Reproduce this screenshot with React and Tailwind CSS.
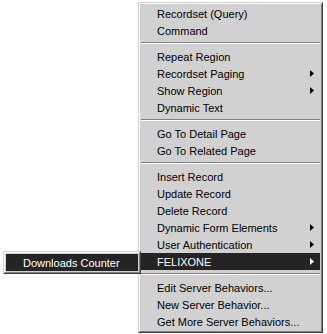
import React from "react";

const MENU = [
  { t: "Recordset (Query)" },
  { t: "Command" },
  "sep",
  { t: "Repeat Region" },
  { t: "Recordset Paging", sub: true },
  { t: "Show Region", sub: true },
  { t: "Dynamic Text" },
  "sep",
  { t: "Go To Detail Page" },
  { t: "Go To Related Page" },
  "sep",
  { t: "Insert Record" },
  { t: "Update Record" },
  { t: "Delete Record" },
  { t: "Dynamic Form Elements", sub: true },
  { t: "User Authentication", sub: true },
  { t: "FELIXONE", sub: true, active: true },
  "sep",
  { t: "Edit Server Behaviors..." },
  { t: "New Server Behavior..." },
  { t: "Get More Server Behaviors..." },
];

function Arrow({ white }) {
  return (
    <svg width="4" height="7" viewBox="0 0 4 7" className="block">
      <polygon points="0,0 4,3.5 0,7" fill={white ? "#ffffff" : "#000000"} />
    </svg>
  );
}

function Frame({ children, className = "" }) {
  return (
    <div className={`border border-t-[#d1d1d1] border-l-[#d1d1d1] border-b-[#404040] border-r-[#404040] bg-[#d1d1d1] ${className}`}>
      <div className="border border-t-white border-l-white border-b-[#808080] border-r-[#808080] p-px">
        {children}
      </div>
    </div>
  );
}

export default function App() {
  return (
    <div
      className="relative w-[327px] h-[334px] bg-white overflow-hidden text-[11px] text-black"
      style={{ fontFamily: '"Liberation Sans", Arial, sans-serif' }}
    >
      <div className="pl-[138px] pt-[2px]">
        <Frame className="w-[185px]">
          {MENU.map((it, i) =>
            it === "sep" ? (
              <div key={i} className="h-[9px] pt-[3px]">
                <div className="h-px bg-[#808080]" />
                <div className="h-px bg-white" />
              </div>
            ) : (
              <div
                key={i}
                className={`h-[17px] leading-[17px] pl-[16px] pr-[6px] flex items-center justify-between whitespace-nowrap ${
                  it.active ? "bg-[#242424] text-white" : ""
                }`}
              >
                <span className="relative top-px">{it.t}</span>
                {it.sub && <Arrow white={it.active} />}
              </div>
            )
          )}
        </Frame>
      </div>

      <div className="absolute left-[3px] top-[251px]">
        <Frame className="w-[138px]">
          <div className="h-[17px] leading-[17px] pl-[17px] bg-[#242424] text-white whitespace-nowrap">
            <span className="relative top-px">Downloads Counter</span>
          </div>
        </Frame>
      </div>
    </div>
  );
}
